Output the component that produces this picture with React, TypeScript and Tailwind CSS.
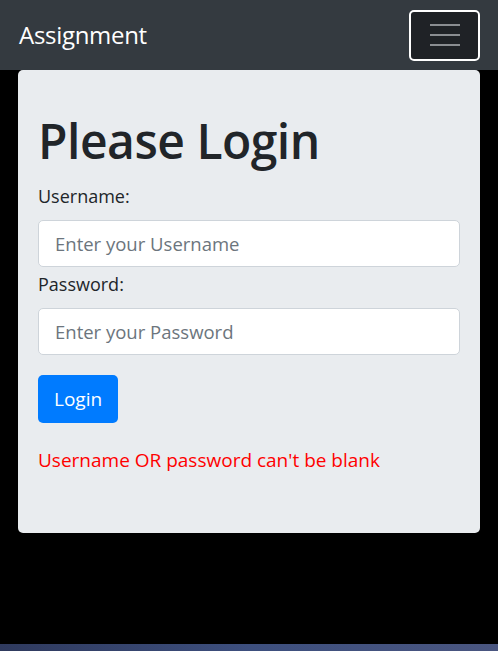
import React, { useState } from 'react';

const font = { fontFamily: '"Open Sans", "Noto Sans", sans-serif' };

const App: React.FC = () => {
  const [username, setUsername] = useState('');
  const [password, setPassword] = useState('');

  return (
    <div className="min-h-[651px] flex flex-col bg-black" style={font}>
      {/* Navbar */}
      <header className="h-[70px] bg-[#343a40] flex items-center justify-between pl-[19px] pr-[18px]">
        <span className="text-white text-[24px] tracking-[-0.3px]">Assignment</span>
        <button
          className="w-[71px] h-[51px] rounded-[5px] border-2 border-white bg-[#1f2226] flex flex-col items-center justify-center gap-[8px]"
          aria-label="Toggle navigation"
        >
          <span className="block w-[30px] h-[2px] bg-[#8a8d91]" />
          <span className="block w-[30px] h-[2px] bg-[#8a8d91]" />
          <span className="block w-[30px] h-[2px] bg-[#8a8d91]" />
        </button>
      </header>

      {/* Main */}
      <main className="flex-1 px-[18px]">
        <div className="bg-[#e9ecef] rounded-[5px] px-[20px] pt-[38px] pb-[59px]">
          <h1 className="text-[#212529] text-[48px] leading-[66px] font-semibold tracking-[-0.5px] mb-[10px]">Please Login</h1>
          <form onSubmit={(e) => e.preventDefault()}>
            <label className="block text-[#212529] text-[18px] leading-[24px] mb-[12px]">Username:</label>
            <input
              value={username}
              onChange={(e) => setUsername(e.target.value)}
              placeholder="Enter your Username"
              className="w-full h-[47px] rounded-[5px] border border-[#ced4da] bg-white px-[16px] text-[18.5px] text-[#495057] placeholder:text-[#6c757d] outline-none"
            />
            <label className="block text-[#212529] text-[18px] leading-[24px] mt-[5px] mb-[12px]">Password:</label>
            <input
              type="password"
              value={password}
              onChange={(e) => setPassword(e.target.value)}
              placeholder="Enter your Password"
              className="w-full h-[47px] rounded-[5px] border border-[#ced4da] bg-white px-[16px] text-[18.5px] text-[#495057] placeholder:text-[#6c757d] outline-none"
            />
            <button
              type="submit"
              className="mt-[20px] h-[48px] px-[16px] rounded-[5px] bg-[#007bff] text-white text-[19px]"
            >
              Login
            </button>
          </form>
          <p className="mt-[23px] text-[#ff0000] text-[19px] leading-[28px]">Username OR password can't be blank</p>
        </div>
      </main>

      {/* Bottom strip */}
      <div className="h-[7px] bg-gradient-to-r from-[#2f3a5e] via-[#3d4f7e] to-[#4a5680]" />
    </div>
  );
};

export default App;
